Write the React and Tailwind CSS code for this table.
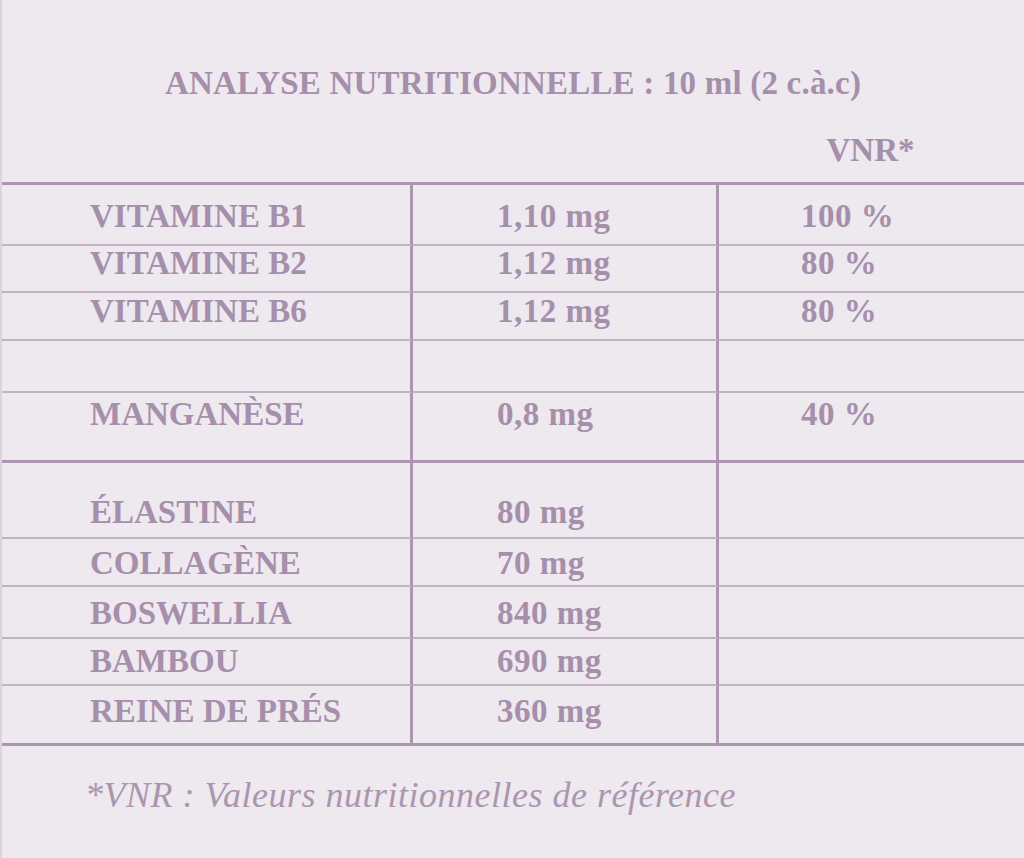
const rows = [
  { name: 'VITAMINE B1', qty: '1,10 mg', vnr: '100 %', h: 'h-[61px]', pt: 'pt-[15px]', line: 'border-b-2 border-b-[#c2b2c5]' },
  { name: 'VITAMINE B2', qty: '1,12 mg', vnr: '80 %', h: 'h-[47px]', pt: 'pt-[1px]', line: 'border-b-2 border-b-[#c2b2c5]' },
  { name: 'VITAMINE B6', qty: '1,12 mg', vnr: '80 %', h: 'h-[48px]', pt: 'pt-[2px]', line: 'border-b-2 border-b-[#c2b2c5]' },
  { name: '', qty: '', vnr: '', h: 'h-[52px]', pt: 'pt-0', line: 'border-b-2 border-b-[#c2b2c5]' },
  { name: 'MANGANÈSE', qty: '0,8 mg', vnr: '40 %', h: 'h-[70px]', pt: 'pt-[5px]', line: 'border-b-[3px] border-b-[#ac96b1]' },
  { name: 'ÉLASTINE', qty: '80 mg', vnr: '', h: 'h-[76px]', pt: 'pt-[33px]', line: 'border-b-2 border-b-[#c2b2c5]' },
  { name: 'COLLAGÈNE', qty: '70 mg', vnr: '', h: 'h-[48px]', pt: 'pt-[8px]', line: 'border-b-2 border-b-[#c2b2c5]' },
  { name: 'BOSWELLIA', qty: '840 mg', vnr: '', h: 'h-[52px]', pt: 'pt-[10px]', line: 'border-b-2 border-b-[#c2b2c5]' },
  { name: 'BAMBOU', qty: '690 mg', vnr: '', h: 'h-[47px]', pt: 'pt-[6px]', line: 'border-b-2 border-b-[#c2b2c5]' },
  { name: 'REINE DE PRÉS', qty: '360 mg', vnr: '', h: 'h-[57px]', pt: 'pt-[9px]', line: 'border-b-0' },
]

// Nutrition facts card: title, VNR header, 3-column table, footnote
export default function App() {
  return (
    <div
      className="min-h-[858px] w-[1024px] bg-[#eee8ef] border-l-2 border-[#ddd3df] text-[#a68fab]"
      style={{ fontFamily: '"Liberation Serif", "DejaVu Serif", serif' }}
    >
      <h1 className="pt-[67px] text-center text-[33px] font-bold leading-none tracking-[0.2px]">
        ANALYSE NUTRITIONNELLE : 10 ml (2 c.à.c)
      </h1>

      <div className="mt-[34px] grid grid-cols-[411px_306px_1fr]">
        <div />
        <div />
        <div className="text-center text-[33px] font-bold leading-none pr-[2px]">VNR*</div>
      </div>

      <div className="mt-[15px] border-y-[3px] border-[#ac96b1]">
        {rows.map((r, i) => (
          <div key={i} className={`grid grid-cols-[411px_306px_1fr] ${r.h}`}>
            <div className={`border-r-[3px] border-r-[#ac96b1] ${r.line} pl-[88px] ${r.pt} text-[33px] font-bold leading-none`}>
              {r.name}
            </div>
            <div className={`border-r-[3px] border-r-[#ac96b1] ${r.line} pl-[84px] ${r.pt} text-[33px] font-bold leading-none tracking-[0.5px]`}>
              {r.qty}
            </div>
            <div className={`${r.line} pl-[82px] ${r.pt} text-[33px] font-bold leading-none tracking-[0.5px]`}>{r.vnr}</div>
          </div>
        ))}
      </div>

      <p className="pt-[31px] pl-[83px] text-[36px] italic leading-none tracking-[0.5px] text-[#ab96af]">
        *VNR : Valeurs nutritionnelles de référence
      </p>
    </div>
  )
}
